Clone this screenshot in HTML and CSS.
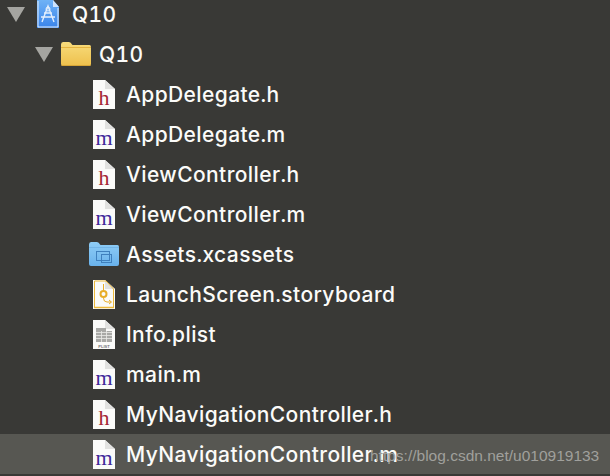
FILE: index.html
```html
<!DOCTYPE html>
<html lang="en">
<head>
<meta charset="utf-8">
<title>Q10</title>
<link rel="stylesheet" href="styles.css">
</head>
<body>
<svg class="defs" width="0" height="0" aria-hidden="true">
  <defs>
    <linearGradient id="gf" x1="0" y1="0" x2="0" y2="1"><stop offset="0" stop-color="#f8dc7c"/><stop offset="1" stop-color="#eec04c"/></linearGradient>
    <linearGradient id="gb" x1="0" y1="0" x2="0" y2="1"><stop offset="0" stop-color="#8fcdf6"/><stop offset="1" stop-color="#69b2ec"/></linearGradient>
    <linearGradient id="gp" x1="0" y1="0" x2="0" y2="1"><stop offset="0" stop-color="#6fb2f6"/><stop offset="1" stop-color="#3a84ea"/></linearGradient>
    <symbol id="page" viewBox="0 0 22 29">
      <path d="M0 0H12L22 9V29H0Z" fill="#fbfbf9"/>
      <path d="M12 0L22 9H12Z" fill="#e2e2e0"/>
    </symbol>
    <symbol id="h" viewBox="0 0 22 29">
      <use href="#page" width="22" height="29"/>
      <text x="11" y="24.500" class="glyph glyph-h" text-anchor="middle">h</text>
    </symbol>
    <symbol id="m" viewBox="0 0 22 29">
      <use href="#page" width="22" height="29"/>
      <text x="11" y="25" class="glyph glyph-m" text-anchor="middle">m</text>
    </symbol>
  </defs>
</svg>

<ul class="tree">
  <li class="row level-0">
    <svg class="tri" width="18" height="15" viewBox="0 0 18 15"><path d="M0 0H18L9 15Z"/></svg>
    <svg class="ico-proj" width="23" height="28" viewBox="0 0 23 28">
      <path d="M0 0H16L22 7V28H0Z" fill="url(#gp)"/>
      <path d="M16 0L22 7H16Z" fill="#cfe3fb"/>
      <path d="M1 1V27H21V8" fill="none" stroke="#e3effd" stroke-width="1"/>
      <path d="M5 22L11 6L17 22M4 17H18M7 13H15" fill="none" stroke="#e3effd" stroke-width="1.400"/>
      <circle cx="11" cy="9" r="2" fill="none" stroke="#e3effd" stroke-width="1"/>
    </svg>
    <span class="name">Q10</span>
  </li>
  <li class="row level-1">
    <svg class="tri" width="18" height="15" viewBox="0 0 18 15"><path d="M0 0H18L9 15Z"/></svg>
    <svg class="ico-folder" width="30" height="24" viewBox="0 0 30 24">
      <path d="M0 2.500Q0 0 2 0H8Q10 0 11 2.500L11.500 3H28.500Q30 3 30 5V22Q30 24 28 24H2Q0 24 0 22Z" fill="url(#gf)"/>
      <path d="M0 5.500H30" stroke="#e5b440" stroke-width="1"/>
      <path d="M0.500 23.500H29.500" stroke="#d7a536" stroke-width="1"/>
    </svg>
    <span class="name">Q10</span>
  </li>
  <li class="row level-2"><svg class="ico-file" width="22" height="29"><use href="#h"/></svg><span class="name">AppDelegate.h</span></li>
  <li class="row level-2"><svg class="ico-file" width="22" height="29"><use href="#m"/></svg><span class="name">AppDelegate.m</span></li>
  <li class="row level-2"><svg class="ico-file" width="22" height="29"><use href="#h"/></svg><span class="name">ViewController.h</span></li>
  <li class="row level-2"><svg class="ico-file" width="22" height="29"><use href="#m"/></svg><span class="name">ViewController.m</span></li>
  <li class="row level-2 row-assets">
    <svg class="ico-assets" width="30" height="24" viewBox="0 0 30 24">
      <path d="M0 2.500Q0 0 2 0H8Q10 0 11 2.500L11.500 3H28.500Q30 3 30 5V22Q30 24 28 24H2Q0 24 0 22Z" fill="url(#gb)"/>
      <path d="M0 5.500H30" stroke="#74b6e8" stroke-width="1"/>
      <rect x="7.500" y="9.500" width="13" height="9" fill="none" stroke="#3f80bd" stroke-width="1"/>
      <rect x="12.500" y="12.500" width="10" height="8" fill="none" stroke="#3f80bd" stroke-width="1"/>
    </svg>
    <span class="name">Assets.xcassets</span>
  </li>
  <li class="row level-2">
    <svg class="ico-file" width="22" height="29" viewBox="0 0 22 29">
      <use href="#page" width="22" height="29"/>
      <path d="M1.500 27V1H13L20.500 9V27" fill="none" stroke="#ecb93c" stroke-width="1"/>
      <path d="M1 27.500H21" stroke="#ecb93c" stroke-width="1.500"/>
      <circle cx="10.500" cy="14" r="3" fill="none" stroke="#e8ad28" stroke-width="2"/>
      <path d="M10.500 4V10M10.500 18Q10.500 22 14 22H18M16 20L18.500 22L16 24" fill="none" stroke="#e8ad28" stroke-width="1"/>
    </svg>
    <span class="name">LaunchScreen.storyboard</span>
  </li>
  <li class="row level-2">
    <svg class="ico-file" width="22" height="29" viewBox="0 0 22 29">
      <use href="#page" width="22" height="29"/>
      <path d="M3 8H13V11H19V22H3Z" fill="#a9a9a6"/>
      <path d="M3 12.500H19M3 15.500H19M3 18.500H19M8.500 11V22M13.500 11V22" stroke="#ecece9" stroke-width="0.800"/>
      <text x="11" y="27.500" class="plist" text-anchor="middle">PLIST</text>
    </svg>
    <span class="name">Info.plist</span>
  </li>
  <li class="row level-2"><svg class="ico-file" width="22" height="29"><use href="#m"/></svg><span class="name">main.m</span></li>
  <li class="row level-2"><svg class="ico-file" width="22" height="29"><use href="#h"/></svg><span class="name">MyNavigationController.h</span></li>
  <li class="row level-2 selected"><svg class="ico-file" width="22" height="29"><use href="#m"/></svg><span class="name">MyNavigationController.m</span></li>
</ul>
<div class="watermark">https://blog.csdn.net/u010919133</div>
</body>
</html>
```

FILE: styles.css
```css
* { box-sizing: border-box; }
html, body {
  margin: 0;
  height: 100%;
  overflow: hidden;
}
body {
  position: relative;
  background: #393936;
  font-family: "Inter", "Liberation Sans", sans-serif;
}
.defs { position: absolute; }
.tree {
  list-style: none;
  margin: -6px 0 0;
  padding: 0;
}
.row {
  display: flex;
  align-items: center;
  height: 40px;
  color: #fbfbf9;
}
.name {
  padding-top: 2px;
  font-size: 21px;
  font-weight: 500;
  line-height: 24px;
  letter-spacing: 0.400px;
  font-feature-settings: "tnum";
}
.level-0 { padding-left: 7px; }
.level-1 { padding-left: 35px; }
.level-2 { padding-left: 93px; }
.tri { flex: none; fill: #a5a5a1; }
.level-0 .tri { margin-right: 12px; }
.level-1 .tri { margin-right: 8px; }
.ico-proj { flex: none; margin-right: 12px; }
.ico-folder { flex: none; margin-right: 8px; }
.ico-file { flex: none; margin-right: 11px; }
.row-assets { padding-left: 89px; }
.ico-assets { flex: none; margin-right: 7px; }
.selected { background: #575752; }
.glyph { font-family: "Liberation Serif", serif; }
.glyph-h { font-size: 22px; fill: #a42634; }
.glyph-m { font-size: 22px; fill: #40289a; }
.plist {
  font-family: "Liberation Sans", sans-serif;
  font-size: 4px;
  font-weight: 700;
  fill: #77777a;
}
.watermark {
  position: absolute;
  left: 370px;
  top: 447px;
  font-family: "Liberation Sans", sans-serif;
  font-size: 15.500px;
  line-height: 18px;
  color: #a0a09c;
  white-space: nowrap;
}
```
